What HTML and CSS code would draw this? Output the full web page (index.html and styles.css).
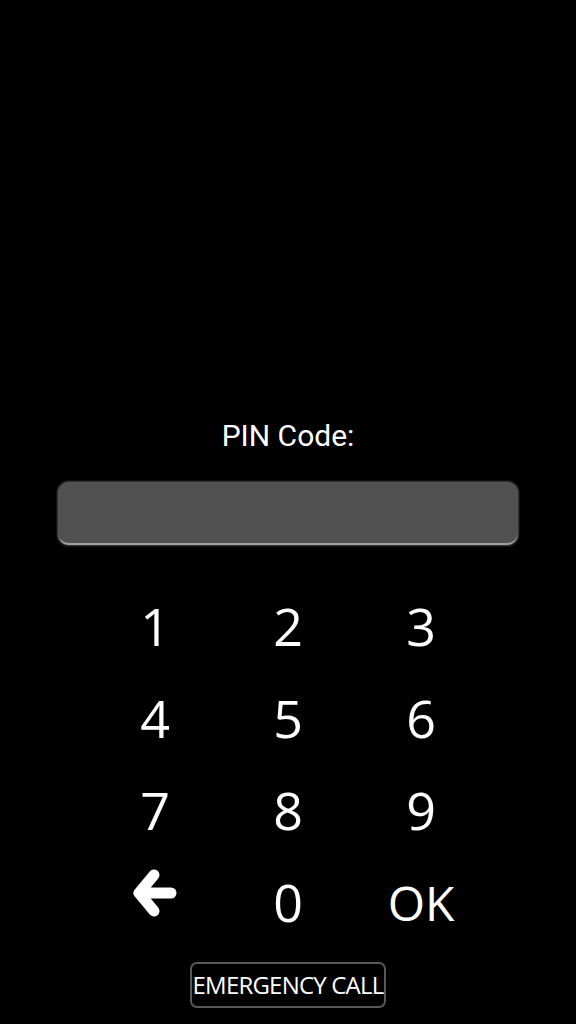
FILE: index.html
```html
<!DOCTYPE html>
<html lang="en">
<head>
  <meta charset="UTF-8">
  <title>PIN Code</title>
  <link rel="stylesheet" href="styles.css">
</head>
<body>

<div class="screen">
  <div class="label">PIN Code:</div>
  <div class="pin-field"></div>

  <!-- teclado numerico -->
  <div class="keypad">
    <button class="key">1</button>
    <button class="key">2</button>
    <button class="key">3</button>
    <button class="key">4</button>
    <button class="key">5</button>
    <button class="key">6</button>
    <button class="key">7</button>
    <button class="key">8</button>
    <button class="key">9</button>
    <button class="key back">
      <svg width="44" height="48" viewBox="0 0 44 48">
        <path d="M38 24 H8 M21 6 L6 24 L21 42" fill="none" stroke="#fff" stroke-width="11" stroke-linecap="round" stroke-linejoin="round"/>
      </svg>
    </button>
    <button class="key">0</button>
    <button class="key ok">OK</button>
  </div>

  <button class="emergency">EMERGENCY CALL</button>
</div>

</body>
</html>
```

FILE: styles.css
```css
html, body {
  margin: 0;
  background-color: #000;
}
.screen {
  width: 576px;
  height: 1024px;
  display: flex;
  flex-direction: column;
  align-items: center;
  color: #fff;
  font-family: "Open Sans", sans-serif;
}
.label {
  margin-top: 416px;
  font-family: Roboto, sans-serif;
  font-size: 30px;
  line-height: 40px;
}
.pin-field {
  margin-top: 26px;
  width: 460px;
  height: 61px;
  background-color: #515151;
  border-radius: 11px;
  border-bottom: 2px solid #a0a0a0;
  box-shadow: 0 0 2px 1px #444;
}
.keypad {
  margin-top: 34px;
  display: grid;
  grid-template-columns: repeat(3, 133px);
  grid-auto-rows: 92px;
}
.key {
  background: none;
  border: none;
  color: #fff;
  font-family: "Open Sans", sans-serif;
  font-size: 52px;
  padding: 0;
  display: flex;
  align-items: center;
  justify-content: center;
}
.key.ok {
  font-size: 48px;
  padding-top: 2px;
}
.key.back {
  padding-bottom: 17px;
}
.emergency {
  margin-top: 15px;
  background: #000;
  color: #fff;
  border: 2px solid #585858;
  border-radius: 7px;
  font-family: "Open Sans", sans-serif;
  font-size: 24px;
  letter-spacing: -0.8px;
  padding: 6px 1px;
  line-height: 30px;
}
```
